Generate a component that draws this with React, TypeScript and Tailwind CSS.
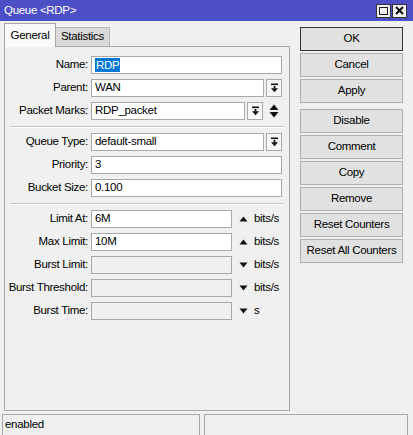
import type { ReactNode } from 'react';

const font = { fontFamily: '"Liberation Sans", Arial, sans-serif', letterSpacing: '-0.3px' };

function DropIcon() {
  return (
    <svg width="9" height="10" viewBox="0 0 9 10">
      <rect x="1" y="0.5" width="7" height="1.6" fill="#111" />
      <rect x="3.6" y="3" width="1.8" height="2.5" fill="#111" />
      <path d="M1 5.2 H8 L4.5 9.2 Z" fill="#111" />
    </svg>
  );
}

function Tri({ up }: { up?: boolean }) {
  return (
    <svg width="9" height="6" viewBox="0 0 9 6">
      {up ? <path d="M0.5 5.5 L4.5 0.5 L8.5 5.5 Z" fill="#111" /> : <path d="M0.5 0.5 L8.5 0.5 L4.5 5.5 Z" fill="#111" />}
    </svg>
  );
}

function UpDown() {
  return (
    <svg width="10" height="14" viewBox="0 0 10 14">
      <path d="M0.5 6 L5 0.5 L9.5 6 Z" fill="#111" />
      <path d="M0.5 8 L9.5 8 L5 13.5 Z" fill="#111" />
    </svg>
  );
}

function Row({ label, children, first }: { label: string; children: ReactNode; first?: boolean }) {
  return (
    <div className={`flex items-center h-[18px] ${first ? '' : 'mt-[5px]'}`}>
      <div className="w-[84px] text-right pr-[1px] text-[11.5px] text-black whitespace-nowrap">{label}</div>
      <div className="ml-[2px] flex items-center">{children}</div>
    </div>
  );
}

function Field({ w, value, disabled, children }: { w: number; value?: string; disabled?: boolean; children?: ReactNode }) {
  return (
    <div
      className={`h-[18px] border border-[#a8a8a8] flex items-center pl-[3px] text-[11.5px] text-black ${disabled ? 'bg-[#f0f0f0]' : 'bg-white'}`}
      style={{ width: w }}
    >
      {children ?? value}
    </div>
  );
}

function DropBtn() {
  return (
    <div className="ml-[2px] w-[16px] h-[18px] border border-[#a8a8a8] bg-[#f7f7f7] flex items-center justify-center">
      <DropIcon />
    </div>
  );
}

function Sep() {
  return <div className="mx-[5px] mt-[6px] border-t border-[#c4c4c4] border-b border-b-white" />;
}

function Unit({ up, text }: { up?: boolean; text: string }) {
  return (
    <div className="flex items-center">
      <div className="ml-[7px] w-[9px] flex items-center"><Tri up={up} /></div>
      <span className="ml-[6px] text-[11.5px] text-black">{text}</span>
    </div>
  );
}

function Btn({ label, main }: { label: string; main?: boolean }) {
  return (
    <div
      className={`w-[103px] h-[24px] flex items-center justify-center text-[11.5px] text-black bg-[#e1e1e1] border ${main ? 'border-[#333333]' : 'border-[#adadad]'}`}
    >
      {label}
    </div>
  );
}

export default function App() {
  return (
    <div className="w-[413px] h-[435px] bg-[#f0f0f0] flex flex-col overflow-hidden select-none" style={font}>
      <div className="h-[21px] bg-[#4d4fc6] flex items-center justify-between pl-[4px] pr-[6px]">
        <span className="text-[11.5px] text-white">Queue &lt;RDP&gt;</span>
        <div className="flex items-center gap-[1px]">
          <div className="w-[15px] h-[14px] bg-[#f0f0f0] border border-[#333] flex items-center justify-center">
            <div className="w-[9px] h-[8px] border border-[#222]" />
          </div>
          <div className="w-[15px] h-[14px] bg-[#f0f0f0] border border-[#333] flex items-center justify-center">
            <svg width="9" height="9" viewBox="0 0 9 9">
              <path d="M1 1 L8 8 M8 1 L1 8" stroke="#111" strokeWidth="2" />
            </svg>
          </div>
        </div>
      </div>

      <div className="flex flex-1 min-h-0">
        <div className="ml-[4px] w-[286px] flex flex-col">
          <div className="h-[25px] flex items-end relative z-10">
            <div className="w-[52px] h-[24px] -mb-[1px] bg-[#f9f9f9] border border-[#a8a8a8] border-b-0 flex items-center justify-center text-[11.5px] text-black">
              General
            </div>
            <div className="w-[54px] h-[19px] bg-[#dadada] border border-[#b8b8b8] border-l-0 border-b-0 flex items-center justify-center text-[11.5px] text-black">
              Statistics
            </div>
          </div>
          <div className="h-[365px] border border-[#a8a8a8] bg-[#f0f0f0] pt-[9px]">
            <Row label="Name:" first>
              <Field w={191}>
                <span className="bg-[#0078d7] text-white px-[1px] leading-[14px]">RDP</span>
              </Field>
            </Row>
            <Row label="Parent:">
              <Field w={173} value="WAN" />
              <DropBtn />
            </Row>
            <Row label="Packet Marks:">
              <Field w={154} value="RDP_packet" />
              <DropBtn />
              <div className="ml-[6px]"><UpDown /></div>
            </Row>
            <Sep />
            <div className="mt-[5px]">
              <Row label="Queue Type:" first>
                <Field w={173} value="default-small" />
                <DropBtn />
              </Row>
              <Row label="Priority:">
                <Field w={191} value="3" />
              </Row>
              <Row label="Bucket Size:">
                <Field w={191} value="0.100" />
              </Row>
            </div>
            <Sep />
            <div className="mt-[5px]">
              <Row label="Limit At:" first>
                <Field w={141} value="6M" />
                <Unit up text="bits/s" />
              </Row>
              <Row label="Max Limit:">
                <Field w={141} value="10M" />
                <Unit up text="bits/s" />
              </Row>
              <Row label="Burst Limit:">
                <Field w={141} disabled />
                <Unit text="bits/s" />
              </Row>
              <Row label="Burst Threshold:">
                <Field w={141} disabled />
                <Unit text="bits/s" />
              </Row>
              <Row label="Burst Time:">
                <Field w={141} disabled />
                <Unit text="s" />
              </Row>
            </div>
          </div>
        </div>

        <div className="ml-[10px] pt-[6px] flex flex-col gap-[2px]">
          <Btn label="OK" main />
          <Btn label="Cancel" />
          <Btn label="Apply" />
          <div className="mt-[4px]"><Btn label="Disable" /></div>
          <Btn label="Comment" />
          <Btn label="Copy" />
          <Btn label="Remove" />
          <Btn label="Reset Counters" />
          <Btn label="Reset All Counters" />
        </div>
      </div>

      <div className="h-[21px] mt-[3px] flex pl-[2px] pr-[5px] gap-[4px]">
        <div className="w-[198px] h-full border border-b-0 border-[#a8a8a8] flex items-center pl-[2px] text-[11.5px] text-black">
          enabled
        </div>
        <div className="flex-1 h-full border border-b-0 border-[#a8a8a8]" />
      </div>
    </div>
  );
}
